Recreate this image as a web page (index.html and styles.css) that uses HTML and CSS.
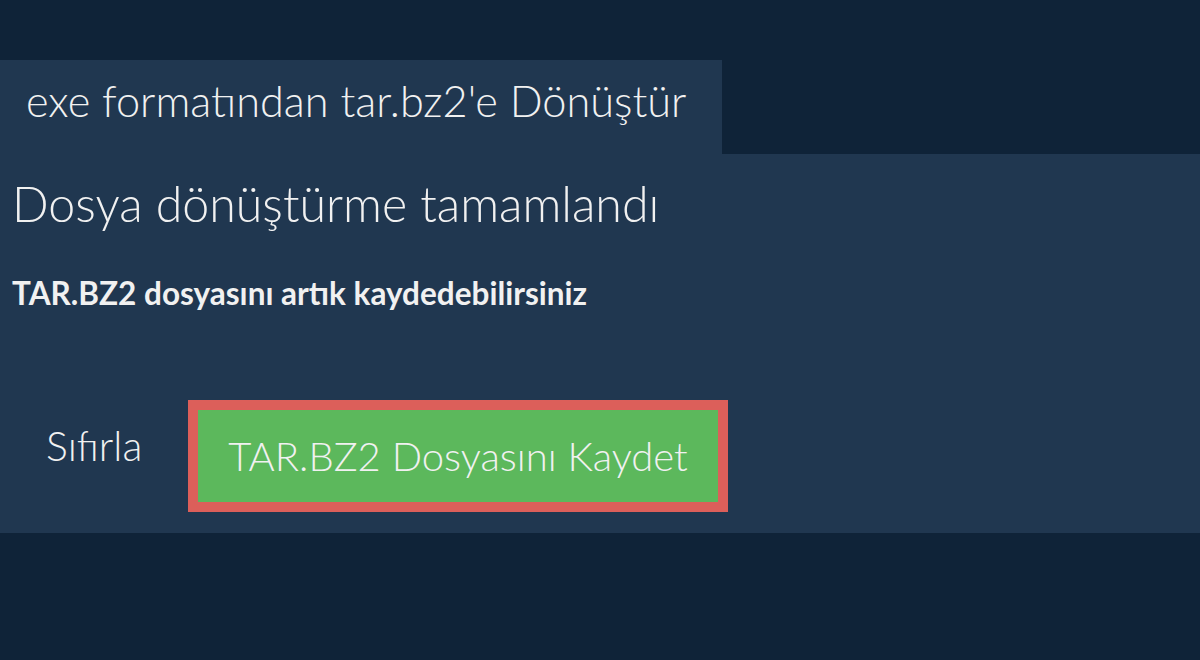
FILE: index.html
```html
<!DOCTYPE html>
<html lang="tr">
<head>
<meta charset="utf-8">
<link rel="stylesheet" href="styles.css">
</head>
<body>
<div class="page">
  <div class="tab">exe formatından tar.bz2'e Dönüştür</div>
  <div class="panel">
    <h1 class="title">Dosya dönüştürme tamamlandı</h1>
    <p class="sub">TAR.BZ2 dosyasını artık kaydedebilirsiniz</p>
    <div class="actions">
      <span class="reset">Sıfırla</span>
      <span class="save-wrap"><span class="save">TAR.BZ2 Dosyasını Kaydet</span></span>
    </div>
  </div>
</div>
</body>
</html>
```
FILE: styles.css
```css
html, body {
  margin: 0;
  padding: 0;
  background: #0f2338;
  font-family: Lato, "Open Sans", sans-serif;
  color: #f1f1f1;
}
.page {
  padding-top: 60px;
}
.tab {
  display: inline-block;
  vertical-align: top;
  width: 722px;
  box-sizing: border-box;
  height: 94px;
  background: #203750;
  font-size: 43.3px;
  font-weight: 300;
  padding-left: 26px;
  line-height: 81px;
}
.panel {
  background: #203750;
  height: 379px;
  padding: 0 12px;
  box-sizing: border-box;
}
.title {
  margin: 0;
  padding-top: 20px;
  font-size: 48.3px;
  font-weight: 300;
  line-height: 58px;
}
.sub {
  margin: 43px 0 0;
  font-size: 31.5px;
  font-weight: 700;
  line-height: 36px;
}
.actions {
  display: flex;
  align-items: flex-start;
  margin-top: 89px;
}
.reset {
  box-sizing: border-box;
  width: 176px;
  padding-left: 34px;
  margin-top: 22px;
  font-size: 41px;
  font-weight: 300;
  line-height: 48px;
}
.save-wrap {
  border: 10px solid #dc5f5a;
  background: #5cb85c;
}
.save {
  display: block;
  width: 520px;
  height: 92px;
  line-height: 92px;
  text-align: center;
  font-size: 40px;
  font-weight: 300;
}
```
